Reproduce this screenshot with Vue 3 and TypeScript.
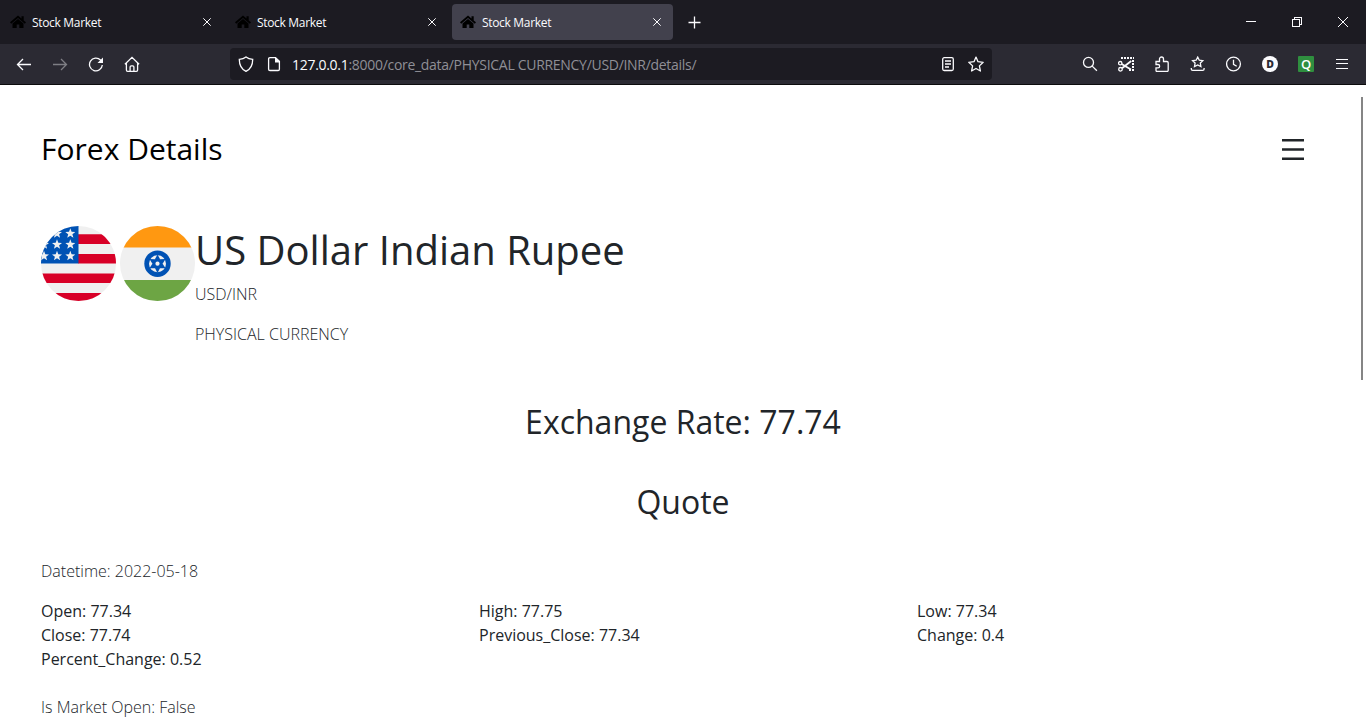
<script setup lang="ts">
interface Tab {
  title: string
  active: boolean
}

const tabs: Tab[] = [
  { title: 'Stock Market', active: false },
  { title: 'Stock Market', active: false },
  { title: 'Stock Market', active: true },
]

const quote: { label: string; value: string }[] = [
  { label: 'Open', value: '77.34' },
  { label: 'High', value: '77.75' },
  { label: 'Low', value: '77.34' },
  { label: 'Close', value: '77.74' },
  { label: 'Previous_Close', value: '77.34' },
  { label: 'Change', value: '0.4' },
  { label: 'Percent_Change', value: '0.52' },
]

const starPath = 'M0 -5.2L1.3 -1.7L5 -1.6L2.1 .7L3.1 4.3L0 2.2L-3.1 4.3L-2.1 .7L-5 -1.6L-1.3 -1.7Z'
const stars: [number, number][] = [
  [16, 7.5], [29.3, 7.5], [3, 18.5], [16, 18.5], [29.3, 18.5], [3, 30], [16, 30], [29.3, 30],
]
const spokes: number[] = [0, 60, 120, 180, 240, 300]
</script>

<template>
  <div class="window">
    <header class="tabbar">
      <div v-for="(tab, i) in tabs" :key="i" class="tab" :class="{ active: tab.active }">
        <svg class="favicon" width="16" height="14" viewBox="0 0 16 14">
          <path d="M8 .6L0 7.300l1.200 1.400L8 3l6.800 5.700L16 7.300l-2.300-1.900V1.300h-2.200v2.300z" />
          <path d="M8 4L2.500 8.600V13h4.200V9.500h2.600V13h4.200V8.600z" />
        </svg>
        <span class="tab-title">{{ tab.title }}</span>
        <svg class="tab-close" width="10" height="10" viewBox="0 0 10 10"><path d="M1.300 1.300l7.400 7.400M8.700 1.300L1.300 8.700" /></svg>
      </div>
      <button class="new-tab"><svg width="13" height="13" viewBox="0 0 13 13"><path d="M6.500 .5v12M.5 6.500h12" /></svg></button>
      <div class="controls">
        <button><svg width="10" height="10" viewBox="0 0 10 10" shape-rendering="crispEdges"><path d="M0 4.500h10" /></svg></button>
        <button><svg width="10" height="10" viewBox="0 0 10 10" shape-rendering="crispEdges"><path d="M.5 2.500h7v7h-7zM2.500 2.500v-2h7v7h-2" /></svg></button>
        <button><svg width="10" height="10" viewBox="0 0 10 10"><path d="M0 0l10 10M10 0L0 10" /></svg></button>
      </div>
    </header>

    <nav class="toolbar">
      <div class="nav-buttons">
        <button><svg viewBox="0 0 16 16"><path d="M15 8.500H1.500M7 3L1.500 8.500 7 14" /></svg></button>
        <button class="dim"><svg viewBox="0 0 16 16"><path d="M1 8.500h13.500M9 3L14.500 8.500 9 14" /></svg></button>
        <button><svg viewBox="0 0 16 16"><path d="M14.300 9A6.400 6.400 0 1 1 12.500 4L14 5.600" /><path class="solid" d="M15 1.500V7H9.500z" /></svg></button>
        <button><svg viewBox="0 0 16 16"><path d="M.9 8.300L8 1.400l7.100 6.900M2.400 7v7q0 1.300 1.200 1.300h8.800q1.200 0 1.200-1.300V7M6.100 15.200v-4.200q0-1.200 1.200-1.200h1.400q1.200 0 1.200 1.200v4.200" /></svg></button>
      </div>

      <div class="urlbar">
        <span class="url-icon"><svg viewBox="0 0 16 16"><path d="M8 .9c-2 1.500-4.300 2.200-6.700 2.500 0 5.200 1.400 9.300 6.700 11.900 5.300-2.600 6.700-6.700 6.700-11.900C12.300 3.100 10 2.400 8 .9z" /></svg></span>
        <span class="url-icon"><svg viewBox="0 0 16 16"><path d="M9.500 1.700H4q-1.400 0-1.400 1.300v10.200q0 1.300 1.400 1.300h8.100q1.300 0 1.300-1.300V5.400z" /><path class="solid" d="M9 1v5.500h5z" /></svg></span>
        <span class="url"><b>127.0.0.1</b>:8000/core_data/PHYSICAL CURRENCY/USD/INR/details/</span>
        <span class="url-icon"><svg viewBox="0 0 16 16"><rect x="2.700" y="1.700" width="10.600" height="12.800" rx="1.500" /><path d="M5 5h6M5 8h6M5 11h4" /></svg></span>
        <span class="url-icon"><svg viewBox="0 0 16 16"><path stroke-linejoin="round" d="M8 1.100l2 4.600 5.200.6-3.800 3.600 1 5.100L8 12.500l-4.400 2.500 1-5.100L.8 6.300l5.200-.6z" /></svg></span>
      </div>

      <div class="actions">
        <button><svg viewBox="0 0 16 16"><circle cx="6.500" cy="6.400" r="5" /><path d="M10.200 10.100l4.700 4.600" /></svg></button>
        <button><svg viewBox="0 0 16 16"><path class="dots" d="M3 2h13M15 4v11M11 14h4" /><circle cx="2.200" cy="7.200" r="1.700" /><circle cx="2.500" cy="13.300" r="1.800" /><path class="blade" d="M3.600 8l9.400 5.500M4 12.200L13.200 5" /></svg></button>
        <button><svg viewBox="0 0 16 16"><path d="M2 5.500h3.500V3a2 2 0 0 1 4 0v2.500h3.400q1.300 0 1.300 1.200v7.600q0 1.200-1.200 1.200H3.200Q2 15.500 2 14.300v-2.500h2a1.600 1.600 0 0 0 0-3.300H2z" /></svg></button>
        <button><svg viewBox="0 0 16 16"><path d="M7.700 1.100l1.600 3.100 3.500.5-2.500 2.400.6 3.400-3.200-1.600-3.200 1.600.6-3.400-2.500-2.400 3.500-.5zM1.300 12v.9q0 1.400 1.400 1.400h10q1.400 0 1.400-1.400V12" /></svg></button>
        <button><svg viewBox="0 0 16 16"><circle cx="7.500" cy="8" r="6.900" /><path d="M7.500 3.800v4.500l3.200 1.900" /></svg></button>
        <button><span class="badge-d">D</span></button>
        <button><span class="badge-q">Q</span></button>
        <button><svg viewBox="0 0 16 16" shape-rendering="crispEdges"><path stroke-width="1" d="M2 3.500h12M2 7.500h12M2 12.500h12" /></svg></button>
      </div>
    </nav>

    <main class="page">
      <i class="scroll-thumb"></i>
      <div class="topline">
        <span class="brand">Forex Details</span>
        <svg class="menu" viewBox="0 0 22 21"><path d="M0 0h22v2.500H0zM0 9.200h22v2.500H0zM0 18.500h22V21H0z" /></svg>
      </div>

      <section class="pair">
        <svg class="flag" viewBox="0 0 75 75">
          <defs><clipPath id="disc"><circle cx="37.500" cy="37.500" r="37.500" /></clipPath></defs>
          <g clip-path="url(#disc)">
            <rect width="75" height="75" fill="#f0f0f0" />
            <path fill="#d80027" d="M37 8.300h38v9.600H37zM37 28h38v9.600H37zM0 47.500h75v9.600H0zM0 67h75v8H0z" />
            <path fill="#0052b4" d="M0 0h37.500v37.500H0z" />
            <path v-for="(s, i) in stars" :key="i" fill="#f0f0f0" :d="starPath" :transform="`translate(${s[0]} ${s[1]})`" />
          </g>
        </svg>
        <svg class="flag" viewBox="0 0 75 75">
          <g clip-path="url(#disc)">
            <rect width="75" height="75" fill="#f0f0f0" />
            <path fill="#ff9811" d="M0 0h75v21.500H0z" />
            <path fill="#6da544" d="M0 54h75v21H0z" />
          </g>
          <circle cx="37.500" cy="37.700" r="13.200" fill="#0052b4" />
          <circle cx="37.500" cy="37.700" r="8.500" fill="#f0f0f0" />
          <g fill="#0052b4" transform="translate(37.500 37.700)">
            <path v-for="a in spokes" :key="a" d="M0 0L-2.600 -4.400L0 -9.300L2.600 -4.400Z" :transform="`rotate(${a})`" />
            <circle r="4.600" />
          </g>
          <circle cx="37.500" cy="37.700" r="2.100" fill="#f0f0f0" />
        </svg>
        <div class="names">
          <h1>US Dollar Indian Rupee</h1>
          <p class="symbol">USD/INR</p>
          <p class="kind">PHYSICAL CURRENCY</p>
        </div>
      </section>

      <h2 class="rate">Exchange Rate: 77.74</h2>
      <h2 class="quote-title">Quote</h2>

      <p class="light">Datetime: 2022-05-18</p>
      <div class="grid">
        <span v-for="q in quote" :key="q.label">{{ q.label }}: {{ q.value }}</span>
      </div>
      <p class="light">Is Market Open: False</p>
    </main>
  </div>
</template>

<style>
html, body { margin: 0; overflow: hidden; background: #fff; }
</style>

<style scoped>
* { box-sizing: border-box; }
.window {
  width: 1366px; height: 720px; overflow: hidden;
  display: flex; flex-direction: column;
  font-family: "Open Sans", "Noto Sans", sans-serif;
}
svg { display: block; fill: none; stroke: #fbfbfe; stroke-width: 1.3; flex: none; }
button { border: 0; background: none; padding: 0; display: flex; align-items: center; justify-content: center; font: inherit; }
.solid { fill: #fbfbfe; stroke: none; }

.tabbar { height: 44px; background: #1c1b22; display: flex; align-items: center; padding-left: 2px; flex: none; }
.tab { width: 221px; height: 36px; margin-right: 4px; border-radius: 4px; padding: 0 11px 0 8px; display: flex; align-items: center; }
.tab.active { background: #42414d; }
.favicon { fill: #000; stroke: none; }
.tab-title { flex: 1; margin-left: 6px; font-size: 12px; line-height: 16px; letter-spacing: -0.32px; color: #fbfbfe; padding-top: 1px; }
.tab-close { stroke-width: 1; }
.new-tab { width: 37px; height: 36px; margin-left: -1px; padding-top: 1px; }
.controls { margin-left: auto; display: flex; }
.controls button { width: 46px; height: 44px; }
.controls svg { stroke-width: 1; }

.toolbar { height: 41px; background: #2b2a33; border-bottom: 1px solid #0c0c0d; display: flex; align-items: center; flex: none; padding: 0 6px; }
.toolbar svg { width: 16px; height: 16px; }
.nav-buttons, .actions { display: flex; }
.nav-buttons button, .actions button { width: 36px; height: 32px; }
.dim { opacity: .4; }
.urlbar { width: 762px; height: 32px; margin-left: 80px; background: #1c1b22; border-radius: 4px; display: flex; align-items: center; padding: 0 2px; }
.url-icon { width: 28px; display: flex; justify-content: center; }
.url { flex: 1; margin-left: 4px; font-size: 14px; line-height: 20px; color: #8f8f96; white-space: nowrap; padding-top: 2px; letter-spacing: -0.295px; }
.url b { font-weight: 400; color: #fbfbfe; }
.actions { margin-left: auto; }
.dots { stroke-width: 2; stroke-dasharray: 2 1; }
.blade { stroke-width: 1.800; }
.badge-d, .badge-q { width: 16px; height: 16px; display: flex; align-items: center; justify-content: center; line-height: 16px; }
.badge-d { border-radius: 50%; background: #fbfbfe; color: #2b2a33; font-size: 10.5px; font-weight: 800; }
.badge-q { border-radius: 1px; background: #2f8f3f; color: #fff; font-size: 13px; font-weight: 600; }

.page { flex: 1; min-height: 0; background: #fff; color: #212529; padding: 41px 11px 0 41px; font-size: 16px; line-height: 24px; position: relative; }
.scroll-thumb { position: absolute; right: 3px; top: 12px; width: 2px; height: 283px; background: #858585; }
.topline { height: 45px; display: flex; align-items: center; justify-content: space-between; padding-right: 51px; }
.brand { color: #000; font-size: 30px; line-height: 45px; }
.menu { width: 22px; height: 21px; margin-top: 2px; fill: #212529; stroke: none; }
.pair { margin-top: 55px; height: 136px; display: flex; align-items: flex-start; }
.flag { width: 75px; height: 75px; stroke: none; }
.flag + .flag { margin-left: 4px; }
h1, h2, p { margin: 0; }
h1 { font-size: 40px; line-height: 48px; font-weight: 400; margin-bottom: 8px; }
.symbol, .kind, .light { font-weight: 300; }
.symbol { margin-bottom: 16px; }
h2 { font-size: 32px; line-height: 40px; font-weight: 400; text-align: center; padding-right: 30px; }
.rate { margin-top: 40px; }
.quote-title { margin: 40px 0 37px; }
.grid { display: grid; grid-template-columns: repeat(3, 438px); margin: 16px 0 24px; }
</style>
